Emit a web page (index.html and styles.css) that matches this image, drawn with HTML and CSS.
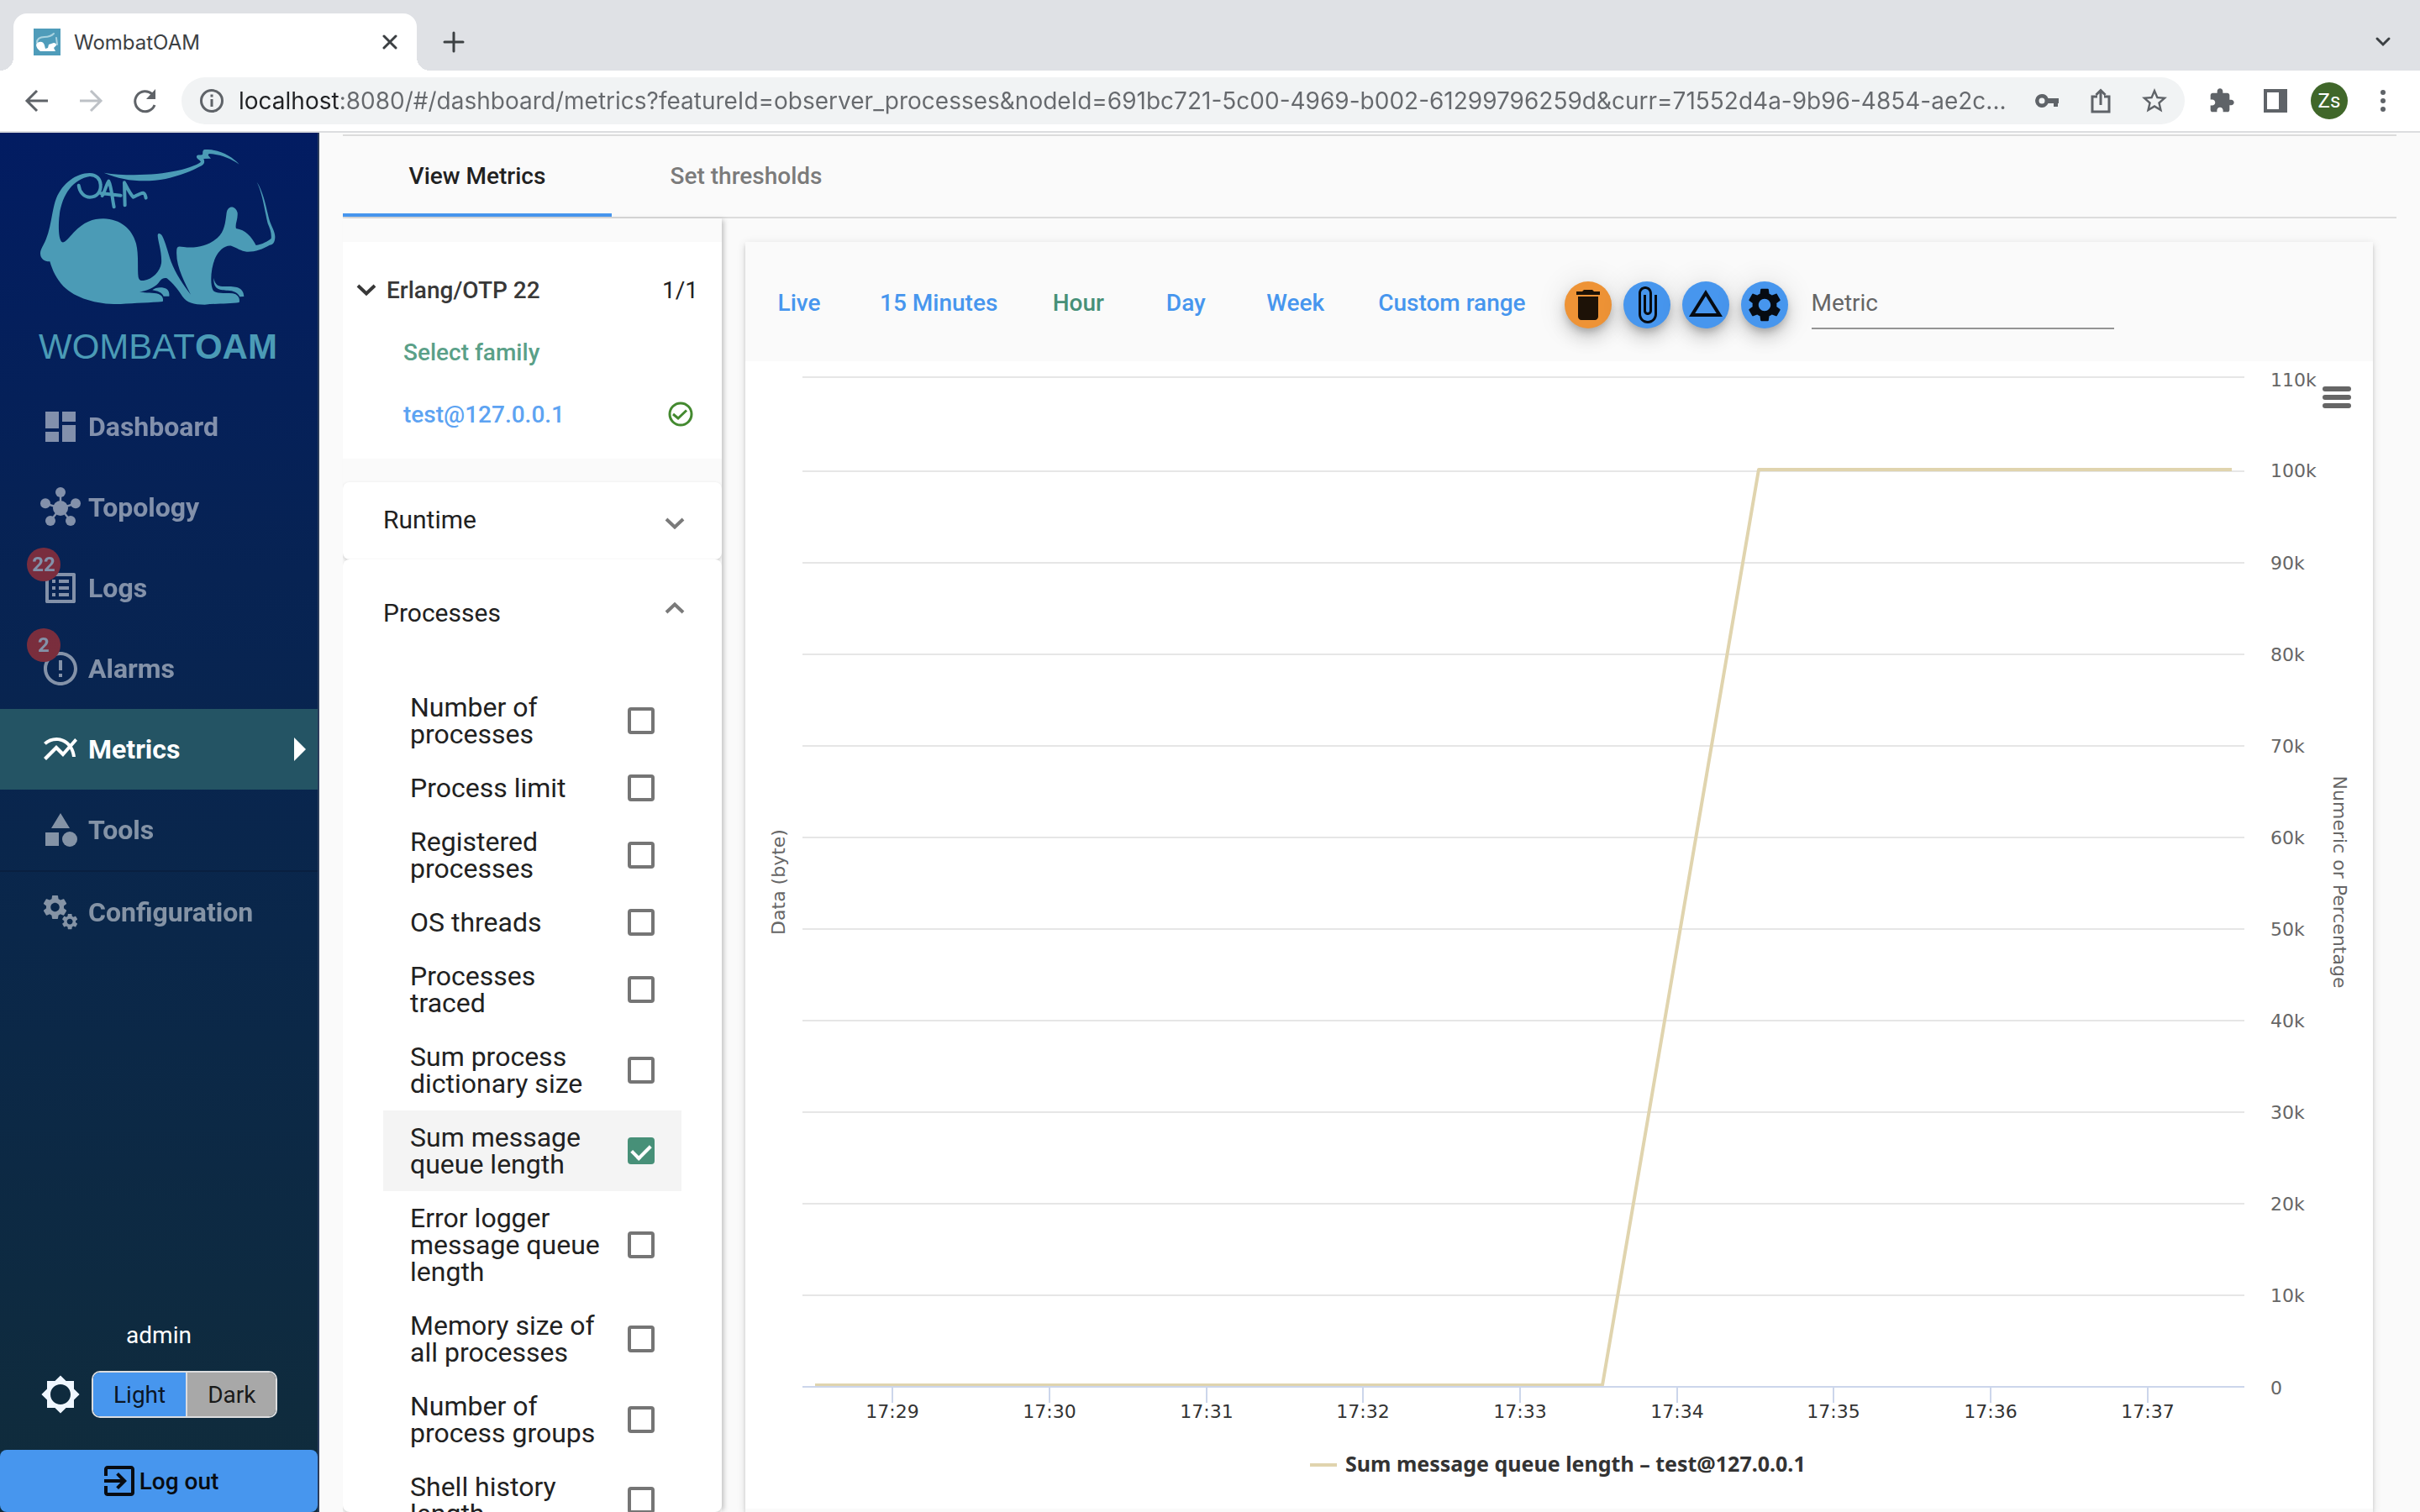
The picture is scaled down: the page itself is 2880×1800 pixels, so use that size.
FILE: index.html
```html
<!DOCTYPE html>
<html lang="en">
<head>
  <meta charset="UTF-8">
  <title>WombatOAM</title>
  <link rel="stylesheet" href="styles.css">
</head>
<body>
  <!-- browser bar -->
  <header class="browser">
    <div class="tab-strip">
      <div class="tab">
        <svg class="favicon" viewBox="0 0 32 32"><path fill="#4f9cba" d="M0 0h32v32H0z"/><path fill="none" stroke="#a9d3e0" stroke-width="2" d="M4 17c0-5 4-7 9-7s8-1 11-4M27 11l1 8"/><path fill="#fff" d="M3 19c3-5 9-4 10 1l1 4 3-1 1-4 6-2c3 0 4 3 2 4l-2 2 2 4H8c-3-2-5-5-5-8z"/></svg>
        <span class="tab-title">WombatOAM</span>
        <button class="tab-close" aria-label="Close tab"><svg width="18" height="18" viewBox="0 0 18 18"><path d="M2 2l14 14M16 2L2 16"/></svg></button>
      </div>
      <button class="tab-new" aria-label="New tab"><svg width="26" height="26" viewBox="0 0 26 26"><path d="M13 2v22M2 13h22"/></svg></button>
      <button class="tab-search" aria-label="Search tabs"><svg width="20" height="14" viewBox="0 0 20 14"><path d="M3 3l7 7 7-7"/></svg></button>
    </div>
    <div class="toolbar">
      <button class="tool" aria-label="Back"><svg class="line" width="32" height="32" viewBox="0 0 32 32"><path d="M29 16H5M16 4L4 16l12 12"/></svg></button>
      <button class="tool tool-off" aria-label="Forward"><svg class="line" width="32" height="32" viewBox="0 0 32 32"><path d="M3 16h24M16 4l12 12-12 12"/></svg></button>
      <button class="tool" aria-label="Reload"><svg width="32" height="32" viewBox="0 0 32 32"><path fill="none" stroke="#5f6368" stroke-width="3" d="M28 21A12 12 0 1 1 25 8l2 3"/><path d="M29 2v12H18z"/></svg></button>
      <div class="omnibox">
        <svg class="info" viewBox="0 0 40 40"><circle cx="20" cy="20" r="12.5"/><path d="M20 18v9M20 12.500v3"/></svg>
        <input class="url" aria-label="Address" value="localhost:8080/#/dashboard/metrics?featureId=observer_processes&amp;nodeId=691bc721-5c00-4969-b002-61299796259d&amp;curr=71552d4a-9b96-4854-ae2c...">
        <button class="tool" aria-label="Passwords"><svg width="28" height="16" viewBox="0 0 28 16"><path fill-rule="evenodd" d="M8 0a8 8 0 0 1 7.500 5H28v6h-1v4h-5v-4h-6.500A8 8 0 1 1 8 0zm0 4.500a3.500 3.500 0 1 0 0 7 3.500 3.500 0 0 0 0-7z"/></svg></button>
        <button class="tool" aria-label="Share"><svg class="line" width="26" height="30" viewBox="0 0 26 30"><path d="M9 10H3v18h20V10h-6M13 20V3M7.500 8L13 2.500 18.500 8"/></svg></button>
        <button class="tool" aria-label="Bookmark"><svg width="36" height="36" viewBox="0 0 24 24"><path d="M22 9.240l-7.190-.62L12 2 9.190 8.630 2 9.240l5.460 4.730L5.820 21 12 17.270 18.180 21l-1.630-7.030L22 9.240zM12 15.400l-3.760 2.270 1-4.280-3.320-2.880 4.380-.38L12 6.100l1.710 4.040 4.380.38-3.320 2.880 1 4.280L12 15.400z"/></svg></button>
      </div>
      <button class="tool" aria-label="Extensions"><svg width="32" height="32" viewBox="0 0 24 24"><path d="M20.500 11H19V7c0-1.100-.9-2-2-2h-4V3.500C13 2.120 11.880 1 10.500 1S8 2.120 8 3.500V5H4c-1.100 0-1.990.9-1.990 2v3.800H3.500c1.490 0 2.700 1.210 2.700 2.700s-1.210 2.700-2.700 2.700H2V20c0 1.100.9 2 2 2h3.800v-1.500c0-1.490 1.210-2.700 2.700-2.700 1.490 0 2.700 1.210 2.700 2.700V22H17c1.100 0 2-.9 2-2v-4h1.500c1.380 0 2.500-1.120 2.500-2.500S21.880 11 20.500 11z"/></svg></button>
      <button class="tool" aria-label="Side panel"><svg width="28" height="28" viewBox="0 0 28 28"><path fill-rule="evenodd" d="M0 0h28v28H0zM4 4v20h14V4z"/></svg></button>
      <button class="tool" aria-label="Profile"><span class="avatar">Zs</span></button>
      <button class="tool" aria-label="Menu"><svg width="8" height="28" viewBox="0 0 8 28"><circle cx="4" cy="4" r="3"/><circle cx="4" cy="14" r="3"/><circle cx="4" cy="24" r="3"/></svg></button>
    </div>
  </header>

  <div class="app">
    <aside class="sidebar">
      <a class="logo" href="#">
        <svg class="wombat" viewBox="143 84 840 556">
          <path d="M370 167C450 180 560 176 630 160C680 148 708 136 716 128C712 121 699 117 701 108C703 101 716 105 722 102C724 96 720 86 730 84C780 82 828 108 853 137C820 114 785 101 745 99L742 104L752 116L726 117C731 127 728 136 720 141C685 160 640 178 590 189C520 202 440 198 370 167Z"/>
          <path d="M143 455C143 440 155 425 163 405C182 360 184 300 200 258C222 205 270 168 320 168L320 180C255 190 212 255 209 345C208 375 210 408 221 415C232 417 245 398 262 380C300 342 330 331 368 331C430 333 470 367 485 420C495 460 489 510 493 540C496 552 502 553 512 552C545 547 570 520 575 490C578 450 562 410 562 390C563 380 572 383 578 392C590 415 598 450 610 485C625 525 655 570 680 602C660 560 624 500 630 440C632 427 640 430 655 432C700 438 745 426 775 400C802 375 803 345 808 310C812 283 840 283 847 310C849 335 837 350 842 366C875 371 897 395 913 426C935 423 955 412 967 402C969 385 964 368 955 348C945 310 937 240 916 200C940 235 950 295 960 333C968 360 982 378 981 398C980 415 974 424 962 425C935 440 910 450 880 449C860 447 845 435 825 428C800 425 780 447 768 470C750 510 749 568 760 587C770 599 795 596 830 598C848 601 857 615 853 630C820 635 770 634 730 638C690 638 665 630 650 608C635 585 615 560 595 544C580 540 575 547 565 560C550 578 520 590 497 592C520 598 545 594 565 600C578 606 584 615 580 627C540 631 480 632 430 636C350 638 270 617 225 572C200 545 187 518 177 484C160 485 143 475 143 455Z"/>
          <path d="M543 586C555 574 582 574 594 582C603 588 604 600 603 608L583 608C577 595 562 589 543 586ZM762 543C767 570 780 573 800 573C835 573 868 572 870 609L855 610C848 594 832 588 812 587C785 587 760 585 762 543Z"/>
          <path class="tattoo" d="M280 212C283 237 300 254 320 254C345 254 360 235 358 210C357 188 342 174 320 174M364 249C375 230 380 206 387 197C397 215 400 262 406 289M358 240L430 248M445 283L443 202C455 225 465 245 475 254C485 250 498 240 510 239C518 241 518 250 520 257"/>
        </svg>
        <span class="logo-text">WOMBAT<b>OAM</b></span>
      </a>
      <nav class="menu">
        <a class="menu-item" href="#dashboard">
          <svg class="icon" viewBox="0 0 24 24"><path d="M3 13h8V3H3v10zm0 8h8v-6H3v6zm10 0h8V11h-8v10zm0-18v6h8V3h-8z"/></svg>
          Dashboard
        </a>
        <a class="menu-item" href="#topology">
          <svg class="icon" viewBox="0 0 24 24"><path stroke="#fff" stroke-width="1.200" d="M12 12.500V3M12 12.500L3 9.700M12 12.500l9-2.800M12 12.500L6 20M12 12.500l6 7.500"/><circle cx="12" cy="12.500" r="4.500"/><circle cx="12" cy="3" r="3"/><circle cx="3" cy="9.600" r="3"/><circle cx="21" cy="9.600" r="3"/><circle cx="6" cy="20" r="3"/><circle cx="18" cy="20" r="3"/></svg>
          Topology
        </a>
        <a class="menu-item" href="#logs">
          <svg class="icon" viewBox="0 0 24 24"><path d="M19 5v14H5V5h14m1.100-2H3.900c-.5 0-.9.4-.9.9v16.200c0 .4.4.9.9.9h16.200c.4 0 .9-.5.9-.9V3.900c0-.5-.5-.9-.9-.9zM11 7h6v2h-6V7zm0 4h6v2h-6v-2zm0 4h6v2h-6zM7 7h2v2H7zm0 4h2v2H7zm0 4h2v2H7z"/></svg>
          Logs
          <span class="badge">22</span>
        </a>
        <a class="menu-item" href="#alarms">
          <svg class="icon" viewBox="0 0 24 24"><path d="M11 15h2v2h-2zm0-8h2v6h-2zm.99-5C6.470 2 2 6.480 2 12s4.470 10 9.990 10C17.520 22 22 17.520 22 12S17.520 2 11.990 2zM12 20c-4.420 0-8-3.580-8-8s3.580-8 8-8 8 3.580 8 8-3.580 8-8 8z"/></svg>
          Alarms
          <span class="badge">2</span>
        </a>
        <a class="menu-item active" href="#metrics">
          <svg class="icon" viewBox="0 0 24 24"><path d="M22 6.920l-1.410-1.410-2.850 3.210C15.680 6.400 12.830 5 9.610 5 6.720 5 4.070 6.160 2 8l1.420 1.420C5.120 7.930 7.270 7 9.610 7c2.740 0 5.090 1.260 6.770 3.240l-2.880 3.240-4-4L2 16.990l1.500 1.500 6-6.010 4 4 4.050-4.550c.75 1.350 1.250 2.900 1.440 4.550H21c-.22-2.300-.95-4.390-2.040-6.140L22 6.920z"/></svg>
          Metrics
        </a>
        <a class="menu-item" href="#tools">
          <svg class="icon" viewBox="0 0 24 24"><path d="M12 2l-5.500 9h11zM3 13.500h8v8H3z"/><circle cx="17.500" cy="17.500" r="4.500"/></svg>
          Tools
        </a>
        <hr class="menu-line">
        <a class="menu-item" href="#configuration">
          <svg class="icon" viewBox="0 0 24 24">
            <defs><path id="gear" d="M19.140 12.940c.04-.3.06-.61.06-.94 0-.32-.02-.64-.07-.94l2.030-1.580c.18-.14.23-.41.12-.61l-1.920-3.320c-.12-.22-.37-.29-.59-.22l-2.390.96c-.5-.38-1.030-.7-1.620-.94l-.36-2.540c-.04-.24-.24-.41-.48-.41h-3.840c-.24 0-.43.17-.47.41l-.36 2.540c-.59.24-1.130.57-1.620.94l-2.390-.96c-.22-.08-.47 0-.59.22L2.740 8.870c-.12.21-.08.47.12.61l2.030 1.580c-.05.3-.09.63-.09.94s.02.64.07.94l-2.030 1.580c-.18.14-.23.41-.12.61l1.920 3.320c.12.22.37.29.59.22l2.390-.96c.5.38 1.030.7 1.620.94l.36 2.540c.05.24.24.41.48.41h3.840c.24 0 .44-.17.47-.41l.36-2.540c.59-.24 1.130-.56 1.620-.94l2.390.96c.22.08.47 0 .59-.22l1.920-3.320c.12-.22.07-.47-.12-.61l-2.010-1.580zM12 15.600c-1.980 0-3.600-1.620-3.600-3.600s1.620-3.600 3.600-3.600 3.600 1.620 3.600 3.600-1.620 3.600-3.600 3.600z"/></defs>
            <use href="#gear" transform="translate(0 .2) scale(.73)"/>
            <use href="#gear" transform="translate(11.800 11.800) scale(.48)"/>
          </svg>
          Configuration
        </a>
      </nav>
      <div class="user">
        <div class="user-name">admin</div>
        <div class="theme">
          <svg class="icon" viewBox="0 0 24 24"><path fill="#f0f7ff" d="M20 8.690V4h-4.690L12 .69 8.690 4H4v4.690L.69 12 4 15.310V20h4.690L12 23.310 15.310 20H20v-4.690L23.310 12 20 8.690zM12 18c-3.310 0-6-2.690-6-6s2.690-6 6-6 6 2.690 6 6-2.690 6-6 6z"/></svg>
          <div class="theme-group">
            <button class="theme-btn on">Light</button>
            <button class="theme-btn">Dark</button>
          </div>
        </div>
        <button class="logout">
          <svg class="icon" viewBox="0 0 24 24"><path d="M10.090 15.590L11.500 17l5-5-5-5-1.410 1.410L12.670 11H3v2h9.670l-2.580 2.590zM19 3H5c-1.110 0-2 .9-2 2v4h2V5h14v14H5v-4H3v4c0 1.100.89 2 2 2h14c1.100 0 2-.9 2-2V5c0-1.100-.9-2-2-2z"/></svg>
          Log out
        </button>
      </div>
    </aside>

    <main class="content">
      <nav class="page-tabs">
        <a class="page-tab current" href="#view">View Metrics</a>
        <a class="page-tab" href="#thresholds">Set thresholds</a>
      </nav>

      <div class="columns">
        <section class="picker">
          <ul class="tree">
            <li class="tree-row tree-family">
              <svg width="24" height="14" viewBox="0 0 24 14"><path d="M2 2l10 9.500L22 2"/></svg>
              <span>Erlang/OTP 22</span>
              <span class="count">1/1</span>
            </li>
            <li class="tree-row tree-child"><a class="green" href="#family">Select family</a></li>
            <li class="tree-row tree-child">
              <a class="blue" href="#node">test@127.0.0.1</a>
              <svg class="ok" width="30" height="30" viewBox="0 0 30 30"><circle cx="15" cy="15" r="13"/><path d="M6 15l6 5 10-9.500"/></svg>
            </li>
          </ul>

          <div class="panel">
            <button class="panel-head">Runtime <svg width="24" height="14" viewBox="0 0 24 14"><path d="M2 2l10 9.500L22 2"/></svg></button>
          </div>
          <div class="panel panel-open">
            <button class="panel-head">Processes <svg width="24" height="14" viewBox="0 0 24 14"><path d="M2 12l10-9.500L22 12"/></svg></button>
            <div class="options">
              <label class="option"><span>Number of processes</span><input type="checkbox"></label>
              <label class="option"><span>Process limit</span><input type="checkbox"></label>
              <label class="option"><span>Registered processes</span><input type="checkbox"></label>
              <label class="option"><span>OS threads</span><input type="checkbox"></label>
              <label class="option"><span>Processes traced</span><input type="checkbox"></label>
              <label class="option"><span>Sum process dictionary size</span><input type="checkbox"></label>
              <label class="option checked"><span>Sum message queue length</span><input type="checkbox" checked></label>
              <label class="option"><span>Error logger message queue length</span><input type="checkbox"></label>
              <label class="option"><span>Memory size of all processes</span><input type="checkbox"></label>
              <label class="option"><span>Number of process groups</span><input type="checkbox"></label>
              <label class="option"><span>Shell history length</span><input type="checkbox"></label>
            </div>
          </div>
        </section>

        <section class="card">
          <div class="filters">
            <button class="range">Live</button>
            <button class="range">15 Minutes</button>
            <button class="range selected">Hour</button>
            <button class="range">Day</button>
            <button class="range">Week</button>
            <button class="range">Custom range</button>
            <div class="actions">
              <button class="fab orange" aria-label="Delete"><svg class="icon" viewBox="0 0 24 24"><path d="M6 19c0 1.100.9 2 2 2h8c1.100 0 2-.9 2-2V7H6v12zM19 4h-3.500l-1-1h-5l-1 1H5v2h14V4z"/></svg></button>
              <button class="fab" aria-label="Attach"><svg class="icon" viewBox="0 0 24 24"><path d="M16.500 6v11.500c0 2.210-1.790 4-4 4s-4-1.790-4-4V5c0-1.380 1.120-2.500 2.500-2.500s2.500 1.120 2.500 2.500v10.500c0 .55-.45 1-1 1s-1-.45-1-1V6H10v9.500c0 1.380 1.120 2.500 2.500 2.500s2.500-1.120 2.500-2.500V5c0-2.210-1.790-4-4-4S7 2.790 7 5v12.500c0 3.040 2.460 5.500 5.500 5.500s5.500-2.460 5.500-5.500V6h-1.500z"/></svg></button>
              <button class="fab" aria-label="Delta"><svg class="icon" viewBox="0 1 24 24"><path d="M12 7.770L18.390 18H5.610L12 7.770M12 4L2 20h20L12 4z"/></svg></button>
              <button class="fab" aria-label="Settings"><svg class="icon" viewBox="0 0 24 24"><use href="#gear"/></svg></button>
            </div>
            <input class="metric" type="text" placeholder="Metric" aria-label="Metric">
          </div>

          <div class="chart-box">
            <button class="chart-menu" aria-label="Chart menu"><i></i><i></i><i></i></button>
            <svg class="chart" viewBox="0 0 1937 1366">
              <path class="grid" d="M68 19H1784M68 131H1784M68 240H1784M68 349H1784M68 458H1784M68 567H1784M68 676H1784M68 785H1784M68 894H1784M68 1003H1784M68 1112H1784"/>
              <path class="series" d="M83 1219H1020L1206 129H1769"/>
              <path class="axis" d="M68 1221H1784M175 1221v19M362 1221v19M549 1221v19M735 1221v19M922 1221v19M1109 1221v19M1295 1221v19M1482 1221v19M1669 1221v19"/>
              <g class="y-labels">
                <text x="1815" y="30">110k</text>
                <text x="1815" y="138">100k</text>
                <text x="1815" y="248">90k</text>
                <text x="1815" y="357">80k</text>
                <text x="1815" y="466">70k</text>
                <text x="1815" y="575">60k</text>
                <text x="1815" y="684">50k</text>
                <text x="1815" y="793">40k</text>
                <text x="1815" y="902">30k</text>
                <text x="1815" y="1011">20k</text>
                <text x="1815" y="1120">10k</text>
                <text x="1815" y="1230">0</text>
              </g>
              <g class="x-labels">
                <text x="175" y="1258">17:29</text>
                <text x="362" y="1258">17:30</text>
                <text x="549" y="1258">17:31</text>
                <text x="735" y="1258">17:32</text>
                <text x="922" y="1258">17:33</text>
                <text x="1109" y="1258">17:34</text>
                <text x="1295" y="1258">17:35</text>
                <text x="1482" y="1258">17:36</text>
                <text x="1669" y="1258">17:37</text>
              </g>
              <text class="axis-title" transform="translate(47 620) rotate(-90)">Data (byte)</text>
              <text class="axis-title" transform="translate(1890 620) rotate(90)">Numeric or Percentage</text>
              <path class="series" d="M672 1314h32"/>
              <text class="legend" x="714" y="1322">Sum message queue length – test@127.0.0.1</text>
            </svg>
          </div>
        </section>
      </div>
    </main>
  </div>
</body>
</html>
```
FILE: styles.css
```css
* {
    box-sizing: border-box;
    padding: 0;
    margin: 0;
}

body {
    display: flex;
    flex-direction: column;
    height: 100vh;
    overflow: hidden;
    background-color: #fafafa;
    color: #212121;
    font: 28px Roboto, "Liberation Sans", sans-serif;
}

button {
    border: 0;
    background: none;
    color: inherit;
    font: inherit;
    cursor: pointer;
}

a {
    color: inherit;
    text-decoration: none;
}

.icon {
    flex: none;
    width: 48px;
    height: 48px;
    fill: currentColor;
}

/* browser bar */
.browser {
    flex: none;
    border-bottom: 2px solid #dcdddf;
    background-color: #fff;
}

.tab-strip {
    display: flex;
    align-items: center;
    height: 84px;
    padding: 16px 12px 0 16px;
    background-color: #dfe1e5;
}

.tab-strip svg path {
    stroke-linecap: round;
}

.tab {
    position: relative;
    display: flex;
    align-items: center;
    width: 480px;
    height: 68px;
    padding: 0 23px 0 24px;
    border-radius: 16px 16px 0 0;
    background-color: #fff;
}

/* curved feet of the tab */
.tab::before,
.tab::after {
    content: "";
    position: absolute;
    bottom: 0;
    width: 16px;
    height: 16px;
}

.tab::before {
    left: -16px;
    background: radial-gradient(circle at 0 0, transparent 16px, #fff 16px);
}

.tab::after {
    right: -16px;
    background: radial-gradient(circle at 100% 0, transparent 16px, #fff 16px);
}

.favicon {
    width: 32px;
    height: 32px;
    margin-right: 16px;
}

.tab-title {
    flex: 1;
    color: #3c4043;
    font-family: Inter, Roboto, sans-serif;
    font-size: 24px;
}

.tab-close,
.tab-new,
.tab-search {
    display: flex;
    align-items: center;
    justify-content: center;
    fill: none;
    stroke: #3c4043;
    stroke-width: 3;
}

.tab-new {
    width: 64px;
    height: 64px;
    margin-left: 12px;
}

.tab-search {
    width: 64px;
    height: 64px;
    margin-left: auto;
}

.toolbar {
    display: flex;
    align-items: center;
    height: 72px;
    padding: 0 12px;
}

.tool {
    flex: none;
    display: flex;
    align-items: center;
    justify-content: center;
    width: 64px;
    height: 56px;
    fill: #5f6368;
}

.line {
    fill: none;
    stroke: #5f6368;
    stroke-width: 3;
}

.tool-off .line {
    stroke: #bdc1c6;
}

.omnibox {
    flex: 1;
    display: flex;
    align-items: center;
    height: 56px;
    margin: 0 12px;
    padding: 0 4px 0 16px;
    border-radius: 28px;
    background-color: #f1f3f4;
}

.info {
    width: 40px;
    height: 40px;
    margin-right: 12px;
    fill: none;
    stroke: #5f6368;
    stroke-width: 3;
}

/* host name is dark, the rest of the address is grey */
.url {
    flex: 1;
    min-width: 0;
    border: 0;
    outline: 0;
    background: linear-gradient(90deg, #202124 122px, #66696d 122px);
    -webkit-background-clip: text;
    background-clip: text;
    color: transparent;
    font-family: Inter, Roboto, sans-serif;
    font-size: 28px;
    line-height: 40px;
}

.avatar {
    width: 44px;
    height: 44px;
    border-radius: 50%;
    background-color: #40672a;
    color: #fff;
    font-size: 24px;
    line-height: 44px;
}

/* layout */
.app {
    flex: 1;
    display: flex;
    min-height: 0;
}

/* sidebar */
.sidebar {
    flex: none;
    display: flex;
    flex-direction: column;
    width: 380px;
    border-right: 2px solid #2b3d5c;
    background: linear-gradient(#021c62, #072353 32%, #0a274a 58%, #102c3b);
    color: #fff;
}

.logo {
    display: flex;
    flex-direction: column;
    align-items: center;
    gap: 26px;
    padding: 20px 2px 23px 0;
    color: #4b9bb6;
}

.wombat {
    width: 280px;
    fill: currentColor;
}

.tattoo {
    fill: none;
    stroke: currentColor;
    stroke-width: 12;
    stroke-linecap: round;
    stroke-linejoin: round;
}

.logo-text {
    font: 42px/48px "Liberation Sans", Arial, sans-serif;
}

.menu-item {
    position: relative;
    display: flex;
    align-items: center;
    gap: 9px;
    height: 96px;
    padding-left: 48px;
    font-size: 32px;
    font-weight: 700;
    opacity: .5;
}

.menu-item.active {
    background-color: #245464;
    opacity: 1;
}

.menu-item.active::after {
    content: "";
    margin: 0 14px 0 auto;
    border: 14px solid transparent;
    border-left-color: #fff;
    border-right: 0;
}

.badge {
    position: absolute;
    top: 0;
    left: 32px;
    width: 40px;
    height: 40px;
    border-radius: 50%;
    background-color: #eb382a;
    font-size: 24px;
    line-height: 40px;
    text-align: center;
}

.menu-line {
    height: 2px;
    border: 0;
    background-color: #092040;
}

.user {
    margin-top: auto;
}

.user-name {
    line-height: 40px;
    text-align: center;
}

.theme {
    display: flex;
    align-items: center;
    gap: 13px;
    padding: 22px 48px 38px;
}

.theme-group {
    display: flex;
    height: 56px;
    overflow: hidden;
    border: 2px solid #dcdddf;
    border-radius: 10px;
}

.theme-btn {
    padding: 0 24px;
    background-color: #a8a8a8;
    color: rgba(0, 0, 0, .87);
}

.theme-btn.on {
    border-right: 2px solid #dcdddf;
    background-color: #4796ee;
}

.logout {
    display: flex;
    align-items: center;
    justify-content: center;
    width: 100%;
    height: 74px;
    border-radius: 8px;
    background-color: #4796ee;
    color: #080c12;
    font-weight: 500;
}

/* content */
.content {
    flex: 1;
    display: flex;
    flex-direction: column;
    min-width: 0;
    padding: 2px 28px 0;
}

.page-tabs {
    flex: none;
    display: flex;
    height: 100px;
    border-top: 2px solid #dcdcdc;
    border-bottom: 2px solid #dcdcdc;
}

.page-tab {
    width: 320px;
    border-bottom: 4px solid transparent;
    color: #7b7b7b;
    font-weight: 500;
    line-height: 96px;
    text-align: center;
}

.page-tab.current {
    border-color: #4796ee;
    color: #212121;
}

.columns {
    flex: 1;
    display: grid;
    grid-template-columns: 451px 1fr;
    gap: 28px;
    min-height: 0;
    padding-right: 28px;
}

/* node and metric picker */
.picker {
    display: flex;
    flex-direction: column;
    min-height: 0;
    padding-top: 28px;
    overflow: hidden;
    box-shadow: 4px 0 6px -2px rgba(0, 0, 0, .25);
}

.tree {
    flex: none;
    margin-bottom: 28px;
    padding: 20px 28px 16px 16px;
    background-color: #fff;
    list-style: none;
}

.tree-row {
    display: flex;
    align-items: center;
    height: 74px;
    font-weight: 500;
}

.tree-family {
    gap: 12px;
    color: #383838;
}

.tree-family svg,
.panel-head svg {
    fill: none;
    stroke: currentColor;
    stroke-width: 4;
}

.count {
    margin-left: auto;
    color: #212121;
    font-weight: 400;
}

.tree-child {
    justify-content: space-between;
    padding: 0 6px 0 56px;
}

.green {
    color: #5aa088;
}

.blue {
    color: #5da3f2;
}

.ok {
    fill: none;
    stroke: #43892f;
    stroke-width: 3;
}

.panel {
    flex: none;
    border-radius: 8px;
    background-color: #fff;
    box-shadow: 0 2px 4px rgba(0, 0, 0, .18);
}

.panel-open {
    flex: 1;
    min-height: 0;
    overflow: hidden;
}

.panel-head {
    display: flex;
    align-items: center;
    justify-content: space-between;
    width: 100%;
    height: 92px;
    padding: 0 44px 4px 48px;
    font-size: 30px;
}

.panel-head svg {
    margin-top: 10px;
    color: #7a7a7a;
}

.panel-open .panel-head {
    height: 128px;
    padding-bottom: 2px;
}

.panel-open .panel-head svg {
    margin: 0 0 10px;
}

.options {
    padding: 16px 48px;
}

.option {
    display: flex;
    align-items: center;
    justify-content: space-between;
    gap: 24px;
    padding: 16px 32px;
    font-size: 32px;
    line-height: 32px;
}

.option.checked {
    background-color: #f4f4f4;
}

.option input {
    flex: none;
    width: 32px;
    height: 32px;
    border: 4px solid #757575;
    border-radius: 4px;
    appearance: none;
}

.option input:checked {
    display: grid;
    place-items: center;
    border-color: #479078;
    background-color: #479078;
}

.option input:checked::before {
    content: "";
    width: 10px;
    height: 18px;
    margin-bottom: 6px;
    border: solid #fff;
    border-width: 0 4px 4px 0;
    transform: rotate(45deg);
}

/* chart card */
.card {
    display: flex;
    flex-direction: column;
    min-width: 0;
    margin-top: 28px;
    box-shadow: 0 6px 2px -4px rgba(0, 0, 0, .2), 0 4px 4px rgba(0, 0, 0, .14), 0 2px 10px rgba(0, 0, 0, .12);
}

.filters {
    flex: none;
    display: flex;
    align-items: center;
    height: 142px;
    padding-top: 4px;
}

.range {
    min-width: 128px;
    padding: 0 32px;
    color: #4796ee;
    font-weight: 500;
    line-height: 72px;
}

.range.selected {
    color: #479078;
}

.actions {
    display: flex;
    gap: 14px;
    padding: 4px 28px 0 14px;
}

.fab {
    display: flex;
    align-items: center;
    justify-content: center;
    width: 56px;
    height: 56px;
    border-radius: 50%;
    background-color: #4796ee;
    box-shadow: 0 6px 10px -2px rgba(0, 0, 0, .2), 0 12px 20px rgba(0, 0, 0, .14), 0 2px 36px rgba(0, 0, 0, .12);
    color: #060b12;
}

.fab.orange {
    background-color: #ee9336;
    color: #1d1207;
}

.metric {
    width: 360px;
    height: 62px;
    border: 0;
    border-bottom: 2px solid #949494;
    background: none;
    font: inherit;
}

.metric::placeholder {
    color: #666;
}

.chart-box {
    position: relative;
    background-color: #fff;
}

.chart {
    display: block;
    width: 100%;
    font-family: "DejaVu Sans", sans-serif;
}

.chart-menu {
    position: absolute;
    top: 30px;
    right: 26px;
    display: flex;
    flex-direction: column;
    gap: 4px;
    width: 34px;
}

.chart-menu i {
    height: 6px;
    border-radius: 3px;
    background-color: #666;
}

.grid {
    stroke: #e6e6e6;
    stroke-width: 2;
}

.axis {
    stroke: #ccd6eb;
    stroke-width: 2;
}

.series {
    fill: none;
    stroke: #e0d4ae;
    stroke-width: 4;
    stroke-linejoin: round;
}

.y-labels {
    fill: #666;
    font-size: 22px;
}

.x-labels {
    fill: #333;
    font-size: 22px;
    text-anchor: middle;
}

.axis-title {
    fill: #666;
    font-size: 22px;
    text-anchor: middle;
}

.legend {
    fill: #333;
    font: bold 25px "Noto Sans", sans-serif;
}
```
